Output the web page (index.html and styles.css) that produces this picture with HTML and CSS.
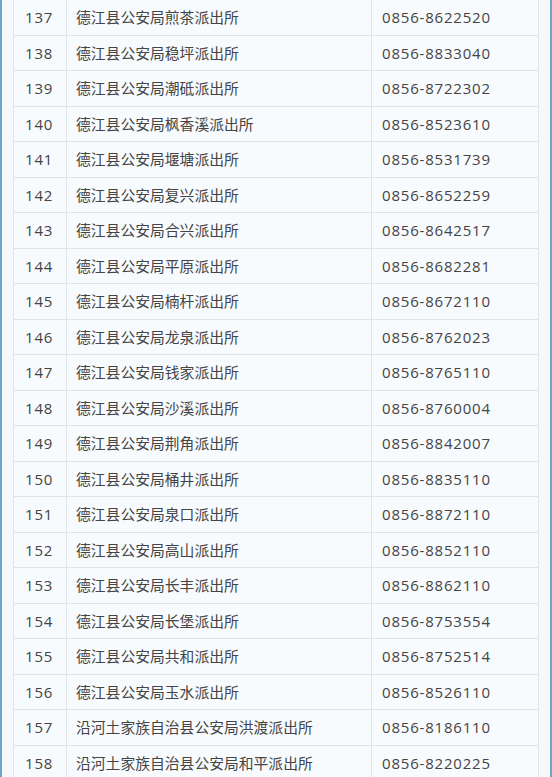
FILE: index.html
```html
<!DOCTYPE html>
<html>
<head>
<meta charset="utf-8">
<link rel="stylesheet" href="styles.css">
</head>
<body>
<div class="frame">
<table class="list">
<colgroup><col class="c1"><col class="c2"><col class="c3"></colgroup>
<tbody>
<tr><td>137</td><td>德江县公安局煎茶派出所</td><td>0856-8622520</td></tr>
<tr><td>138</td><td>德江县公安局稳坪派出所</td><td>0856-8833040</td></tr>
<tr><td>139</td><td>德江县公安局潮砥派出所</td><td>0856-8722302</td></tr>
<tr><td>140</td><td>德江县公安局枫香溪派出所</td><td>0856-8523610</td></tr>
<tr><td>141</td><td>德江县公安局堰塘派出所</td><td>0856-8531739</td></tr>
<tr><td>142</td><td>德江县公安局复兴派出所</td><td>0856-8652259</td></tr>
<tr><td>143</td><td>德江县公安局合兴派出所</td><td>0856-8642517</td></tr>
<tr><td>144</td><td>德江县公安局平原派出所</td><td>0856-8682281</td></tr>
<tr><td>145</td><td>德江县公安局楠杆派出所</td><td>0856-8672110</td></tr>
<tr><td>146</td><td>德江县公安局龙泉派出所</td><td>0856-8762023</td></tr>
<tr><td>147</td><td>德江县公安局钱家派出所</td><td>0856-8765110</td></tr>
<tr><td>148</td><td>德江县公安局沙溪派出所</td><td>0856-8760004</td></tr>
<tr><td>149</td><td>德江县公安局荆角派出所</td><td>0856-8842007</td></tr>
<tr><td>150</td><td>德江县公安局桶井派出所</td><td>0856-8835110</td></tr>
<tr><td>151</td><td>德江县公安局泉口派出所</td><td>0856-8872110</td></tr>
<tr><td>152</td><td>德江县公安局高山派出所</td><td>0856-8852110</td></tr>
<tr><td>153</td><td>德江县公安局长丰派出所</td><td>0856-8862110</td></tr>
<tr><td>154</td><td>德江县公安局长堡派出所</td><td>0856-8753554</td></tr>
<tr><td>155</td><td>德江县公安局共和派出所</td><td>0856-8752514</td></tr>
<tr><td>156</td><td>德江县公安局玉水派出所</td><td>0856-8526110</td></tr>
<tr><td>157</td><td>沿河土家族自治县公安局洪渡派出所</td><td>0856-8186110</td></tr>
<tr><td>158</td><td>沿河土家族自治县公安局和平派出所</td><td>0856-8220225</td></tr>
</tbody>
</table>
</div>
</body>
</html>
```
FILE: styles.css
```css
html, body {
  margin: 0;
  padding: 0;
  background: #f6f9fc;
}
.frame {
  width: 552px;
  height: 777px;
  box-sizing: border-box;
  border-left: 2px solid #6fa5c9;
  border-right: 2px solid #6fa5c9;
  background: #f6f9fc;
  padding: 0 12px 0 11px;
  overflow: hidden;
}
.list {
  border-collapse: collapse;
  width: 525px;
  table-layout: fixed;
  margin-top: -1px;
  font-family: "Open Sans", "Noto Sans CJK SC", sans-serif;
  font-size: 15px;
  color: #444444;
}
.c1 { width: 53px; }
.c2 { width: 305px; }
.c3 { width: 167px; }
.list td {
  height: 35.5px;
  box-sizing: border-box;
  padding: 0 0 0 10px;
  border: 1px solid #dfe4ea;
  background: #f8fbfe;
  white-space: nowrap;
  vertical-align: middle;
  line-height: 20px;
  letter-spacing: 0.8px;
}
.list td:first-child {
  padding-left: 11px;
}
.list td:nth-child(2) {
  padding-left: 9px;
  letter-spacing: 0;
  font-size: 14.8px;
}
```
